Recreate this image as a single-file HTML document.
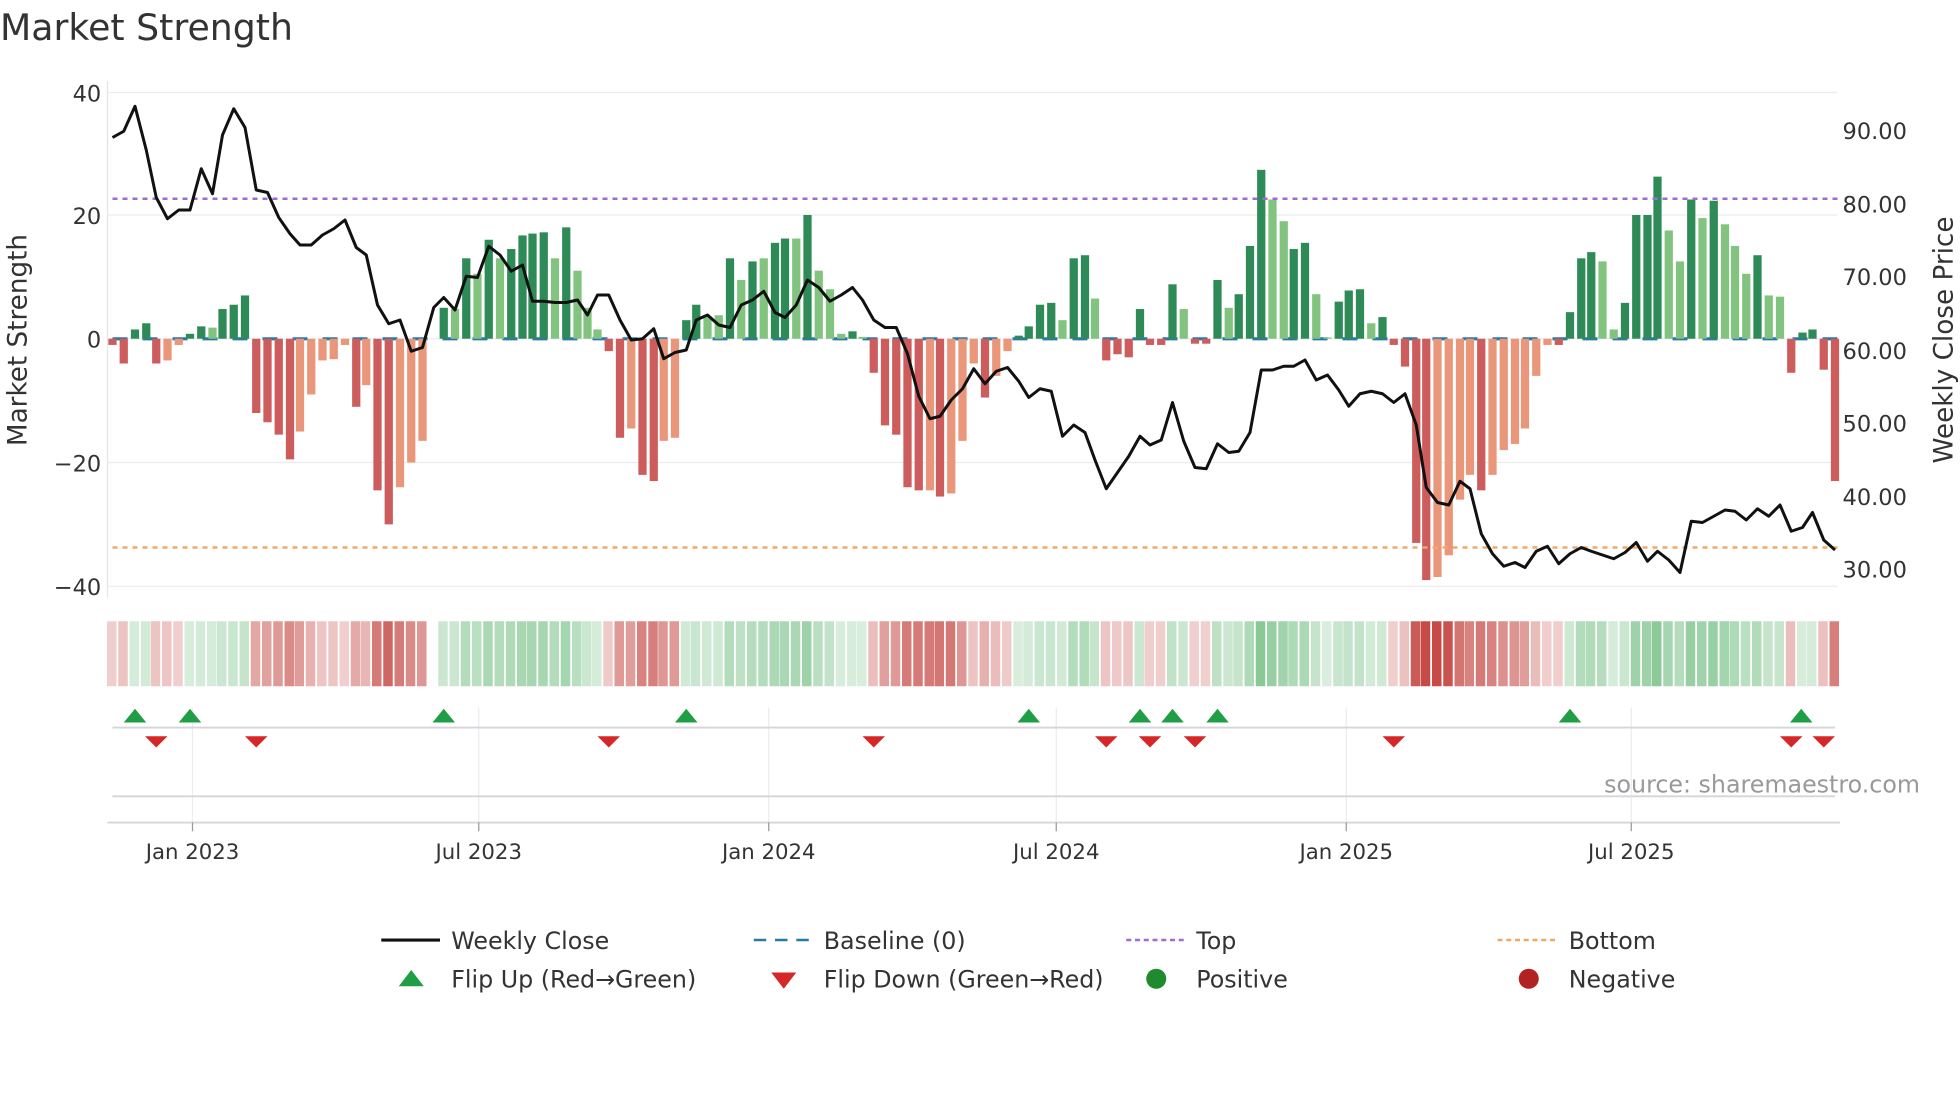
<!DOCTYPE html>
<html><head><meta charset="utf-8"><style>
html,body{margin:0;padding:0;background:#fff;width:1960px;height:1102px;overflow:hidden}
svg{display:block}
text{font-family:"DejaVu Sans","Liberation Sans",sans-serif;fill:#333}
</style></head><body>
<svg id="s" width="1960" height="1102" viewBox="0 0 1568 881.6" xmlns="http://www.w3.org/2000/svg">
<text x="0" y="32" font-size="29">Market Strength</text>
<g stroke="#ececf0" stroke-width="1">
<line x1="86" x2="1470" y1="74" y2="74"/><line x1="86" x2="1470" y1="172" y2="172"/>
<line x1="86" x2="1470" y1="271" y2="271"/><line x1="86" x2="1470" y1="370" y2="370"/>
<line x1="86" x2="1470" y1="469" y2="469"/>
</g>
<line x1="86" x2="86" y1="65" y2="478" stroke="#e3e3e8"/>
<g font-size="18" text-anchor="end">
<text x="81" y="81">40</text><text x="81" y="179">20</text><text x="81" y="278">0</text>
<text x="81" y="377">−20</text><text x="81" y="476">−40</text>
</g>
<g font-size="18">
<text x="1474" y="111">90.00</text><text x="1474" y="170">80.00</text><text x="1474" y="228">70.00</text>
<text x="1474" y="287">60.00</text><text x="1474" y="345">50.00</text><text x="1474" y="404">40.00</text>
<text x="1474" y="462">30.00</text>
</g>
<text transform="translate(21,272) rotate(-90)" font-size="21" text-anchor="middle">Market Strength</text>
<text transform="translate(1562,272) rotate(-90)" font-size="21" text-anchor="middle">Weekly Close Price</text>
<line x1="90" x2="1470" y1="271" y2="271" stroke="#2a78a6" stroke-width="2.5" stroke-dasharray="12,12"/>
<g id="bars"></g>
<line x1="90" x2="1470" y1="159" y2="159" stroke="#a06ad8" stroke-width="2" stroke-dasharray="4,4"/>
<line x1="90" x2="1470" y1="438" y2="438" stroke="#f0a868" stroke-width="2" stroke-dasharray="4,4"/>
<polyline id="price" fill="none" stroke="#111" stroke-width="2.4" stroke-linejoin="round"/>
<g id="heat"></g>
<g stroke="#ececf0">
<line x1="154" x2="154" y1="566" y2="660"/><line x1="383" x2="383" y1="566" y2="660"/>
<line x1="615" x2="615" y1="566" y2="660"/><line x1="845" x2="845" y1="566" y2="660"/>
<line x1="1077" x2="1077" y1="566" y2="660"/><line x1="1305" x2="1305" y1="566" y2="660"/>
</g>
<line x1="90" x2="1468" y1="582" y2="582" stroke="#d5d5da" stroke-width="1.5"/>
<line x1="90" x2="1468" y1="637" y2="637" stroke="#d5d5da" stroke-width="1.5"/>
<line x1="86" x2="1472" y1="658" y2="658" stroke="#d5d5da" stroke-width="1.5"/>
<g stroke="#999"><line x1="154" x2="154" y1="658" y2="665"/><line x1="383" x2="383" y1="658" y2="665"/><line x1="615" x2="615" y1="658" y2="665"/><line x1="845" x2="845" y1="658" y2="665"/><line x1="1077" x2="1077" y1="658" y2="665"/><line x1="1305" x2="1305" y1="658" y2="665"/></g>
<g id="marks"></g>
<text x="1536" y="634" font-size="19" text-anchor="end" style="fill:#999">source: sharemaestro.com</text>
<g font-size="17" text-anchor="middle">
<text x="154" y="687">Jan 2023</text><text x="383" y="687">Jul 2023</text><text x="615" y="687">Jan 2024</text>
<text x="845" y="687">Jul 2024</text><text x="1077" y="687">Jan 2025</text><text x="1305" y="687">Jul 2025</text>
</g>
<g font-size="19">
<line x1="305" x2="352" y1="752" y2="752" stroke="#111" stroke-width="2.5"/><text x="361" y="759">Weekly Close</text>
<line x1="603" x2="650" y1="752" y2="752" stroke="#2a78a6" stroke-width="2" stroke-dasharray="10,7"/><text x="659" y="759">Baseline (0)</text>
<line x1="901" x2="948" y1="752" y2="752" stroke="#a06ad8" stroke-width="2" stroke-dasharray="4,3"/><text x="957" y="759">Top</text>
<line x1="1198" x2="1245" y1="752" y2="752" stroke="#f0a868" stroke-width="2" stroke-dasharray="4,3"/><text x="1255" y="759">Bottom</text>
<polygon points="319,789 329,776 339,789" fill="#1f9e45"/><text x="361" y="790">Flip Up (Red→Green)</text>
<polygon points="617,778 637,778 627,791" fill="#d62728"/><text x="659" y="790">Flip Down (Green→Red)</text>
<circle cx="925" cy="783" r="8" fill="#1f8a2e"/><text x="957" y="790">Positive</text>
<circle cx="1223" cy="783" r="8" fill="#b22222"/><text x="1255" y="790">Negative</text>
</g>
</svg>
<script>
var B=[[90,-1,1],[99,-4,1],[108,1.5,1],[117,2.5,1],[125,-4,1],[134,-3.5,0],[143,-1,0],[152,0.8,1],[161,2,1],[170,1.8,0],[178,4.8,1],[187,5.5,1],[196,7,1],
[205,-12,1],[214,-13.5,1],[223,-15.5,1],[232,-19.5,1],[240,-15,0],[249,-9,0],[258,-3.5,0],[267,-3.3,0],[276,-1,0],[285,-11,1],[293,-7.5,0],[302,-24.5,1],[311,-30,1],[320,-24,0],[329,-20,0],[338,-16.5,0],
[355,5,1],[364,4.8,0],[373,13,1],[382,10.5,0],[391,16,1],[400,13,0],[409,14.5,1],[418,16.7,1],[426,17,1],[435,17.2,1],[444,13,0],[453,18,1],[462,11,0],[470,5,0],[478,1.5,0],
[487,-2,1],[496,-16,1],[505,-14.5,0],[514,-22,1],[523,-23,1],[531,-16.5,0],[540,-16,0],
[549,3,1],[557,5.5,1],[566,3.5,0],[575,3.8,0],[584,13,1],[593,9.5,0],[602,12.5,1],[611,13,0],[620,15.5,1],[628,16.2,1],[637,16.2,0],[646,20,1],[655,11,0],[664,8,0],[673,0.8,0],[682,1.2,1],[690,0.3,0],
[699,-5.5,1],[708,-14,1],[717,-15.5,1],[726,-24,1],[735,-24.5,1],[744,-24.5,0],[752,-25.5,1],[761,-25,0],[770,-16.5,0],[779,-4,0],[788,-9.5,1],[797,-6,0],[806,-2,0],
[815,0.5,1],[823,2,1],[832,5.5,1],[841,5.8,1],[850,3,0],[859,13,1],[868,13.5,1],[876,6.5,0],[885,-3.5,1],[894,-2.5,1],[903,-3,1],[912,4.8,1],[920,-1,1],[929,-1,1],[938,8.8,1],[947,4.8,0],[956,-0.8,1],[965,-0.8,1],
[974,9.5,1],[983,5,0],[991,7.2,1],[1000,15,1],[1009,27.3,1],[1018,22.5,0],[1027,19,0],[1035,14.5,1],[1044,15.5,1],[1053,7.2,0],[1062,0.2,0],[1071,6,1],[1079,7.8,1],[1088,8,1],[1097,2.5,0],[1106,3.5,1],
[1115,-1,1],[1124,-4.5,1],[1133,-33,1],[1141,-39,1],[1150,-38.5,0],[1159,-35,0],[1168,-26,0],[1176,-22,0],[1185,-24.5,1],[1194,-22,0],[1203,-18,0],[1212,-17,0],[1220,-14.5,0],[1229,-6,0],[1238,-1,0],[1247,-1,1],
[1256,4.3,1],[1265,13,1],[1273,14,1],[1282,12.5,0],[1291,1.5,0],[1300,5.8,1],[1309,20,1],[1318,20,1],[1326,26.2,1],[1335,17.5,0],[1344,12.5,0],[1353,22.5,1],[1362,19.5,0],[1371,22.3,1],[1380,18.5,0],[1388,15,0],[1397,10.5,0],[1406,13.5,1],[1415,7,0],[1424,6.8,0],
[1433,-5.5,1],[1442,1,1],[1450,1.5,1],[1459,-5,1],[1468,-23,1]];
var P="90,110 99,105 108,85 117,120 125,158 134,175 143,168 152,168 161,135 170,155 178,108 187,87 196,102 205,152 214,154 223,174 232,187 240,196 249,196 258,188 267,183 276,176 285,198 293,204 302,244 311,259 320,256 329,281 338,278 347,246 355,238 364,248 373,221 382,222 391,197 400,204 409,217 418,212 426,241 435,241 444,242 453,242 462,240 470,252 478,236 487,236 496,256 505,272 514,271 523,263 531,287 540,282 549,280 557,256 566,252 575,260 584,262 593,244 602,240 611,233 620,250 628,254 637,244 646,224 655,230 664,241 673,236 682,230 690,240 699,256 708,262 717,262 726,283 735,317 744,335 752,333 761,320 770,311 779,295 788,307 797,297 806,294 815,305 823,318 832,311 841,313 850,349 859,340 868,346 876,368 885,391 894,378 903,365 912,349 920,356 929,352 938,322 947,353 956,374 965,375 974,355 983,362 991,361 1000,346 1009,296 1018,296 1027,293 1035,293 1044,288 1053,304 1062,300 1071,312 1079,325 1088,315 1097,313 1106,315 1115,322 1124,315 1133,340 1141,390 1150,402 1159,404 1168,385 1176,391 1185,427 1194,443 1203,453 1212,450 1220,454 1229,441 1238,437 1247,451 1256,443 1265,438 1273,441 1282,444 1291,447 1300,442 1309,434 1318,449 1326,441 1335,448 1344,458 1353,417 1362,418 1371,413 1380,408 1388,409 1397,416 1406,407 1415,413 1424,404 1433,425 1442,422 1450,410 1459,432 1468,440";
var ns="http://www.w3.org/2000/svg",bars=document.getElementById('bars'),heat=document.getElementById('heat'),marks=document.getElementById('marks');
function el(t,a,p){var e=document.createElementNS(ns,t);for(var k in a)e.setAttribute(k,a[k]);p.appendChild(e);return e;}
B.forEach(function(b){var v=b[1],h=Math.abs(v)*4.95,y=v>=0?271-h:271;
var c=v>=0?(b[2]?'#2e8b57':'#82c47f'):(b[2]?'#cd5c5c':'#e9967a');
el('rect',{x:b[0]-3.3,y:y,width:6.6,height:Math.max(h,1),fill:c},bars);
var a=Math.min(1,0.25+Math.abs(v)/40*0.8);
var hc=v>=0?'rgba(80,175,100,'+(a*0.85)+')':'rgba(198,75,70,'+a+')';
el('rect',{x:b[0]-4.4,y:497,width:7.6,height:52,fill:hc},heat);});
document.getElementById('price').setAttribute('points',P);
[108,152,355,549,823,912,938,974,1256,1441].forEach(function(x){el('polygon',{points:(x-9)+',578 '+x+',567 '+(x+9)+',578',fill:'#1f9e45'},marks);});
[125,205,487,699,885,920,956,1115,1433,1459].forEach(function(x){el('polygon',{points:(x-9)+',589 '+(x+9)+',589 '+x+',598',fill:'#d62728'},marks);});
</script>
</body></html>
